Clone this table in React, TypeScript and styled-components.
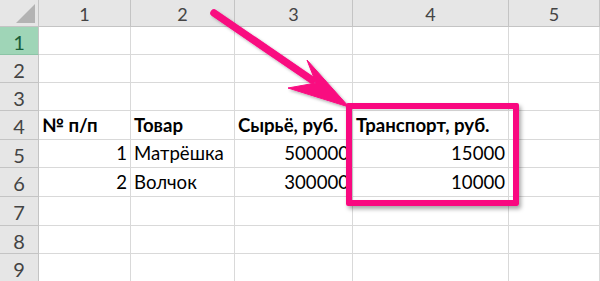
import React from "react";
import styled, { createGlobalStyle } from "styled-components";

const GlobalStyle = createGlobalStyle`
  html, body {
    margin: 0;
    padding: 0;
    background: #ffffff;
    overflow: hidden;
  }
  body {
    font-family: Lato, "Open Sans", "Liberation Sans", sans-serif;
  }
`;

const ACCENT = "#f90880";
const GRID_LINE = "#d9d9d9";
const HEAD_BG = "#e6e6e6";
const HEAD_LINE = "#c4c4c4";

const COLUMN_WIDTHS = [39, 92, 104, 118, 156, 91];
const ROW_HEIGHTS = [27, 28, 28, 28, 29, 28, 29, 29, 28, 28];

const Sheet = styled.div`
  position: relative;
  width: 600px;
  height: 281px;
  overflow: hidden;
  background: #ffffff;
`;

const Grid = styled.div<{ $cols: number[]; $rows: number[] }>`
  display: grid;
  grid-template-columns: ${(p) => p.$cols.map((c) => `${c}px`).join(" ")};
  grid-template-rows: ${(p) => p.$rows.map((r) => `${r}px`).join(" ")};
`;

const Corner = styled.div`
  position: relative;
  background: ${HEAD_BG};
  border-right: 1px solid ${HEAD_LINE};
  border-bottom: 1px solid ${HEAD_LINE};
  box-sizing: border-box;
  &::after {
    content: "";
    position: absolute;
    right: 3px;
    bottom: 3px;
    width: 0;
    height: 0;
    border-style: solid;
    border-width: 0 0 19px 19px;
    border-color: transparent transparent #b3b3b3 transparent;
  }
`;

const ColHead = styled.div`
  display: flex;
  align-items: center;
  justify-content: center;
  background: ${HEAD_BG};
  border-right: 1px solid ${HEAD_LINE};
  border-bottom: 1px solid ${HEAD_LINE};
  box-sizing: border-box;
  color: #444444;
  font-size: 18px;
  padding-top: 1px;
`;

const RowHead = styled.div<{ $selected?: boolean }>`
  display: flex;
  align-items: center;
  justify-content: center;
  background: ${(p) => (p.$selected ? "#9fd5b7" : HEAD_BG)};
  border-right: 1px solid ${HEAD_LINE};
  border-bottom: 1px solid ${(p) => (p.$selected ? "#8cc4a6" : HEAD_LINE)};
  box-sizing: border-box;
  color: ${(p) => (p.$selected ? "#185c37" : "#444444")};
  font-size: 20px;
  padding-top: 2px;
`;

const Cell = styled.div<{ $align?: "left" | "right"; $bold?: boolean }>`
  display: flex;
  align-items: flex-end;
  justify-content: ${(p) => (p.$align === "right" ? "flex-end" : "flex-start")};
  border-right: 1px solid ${GRID_LINE};
  border-bottom: 1px solid ${GRID_LINE};
  box-sizing: border-box;
  padding: 0 3px 3px 3px;
  color: #000000;
  font-size: 18.6px;
  line-height: 22px;
  font-weight: ${(p) => (p.$bold ? 700 : 400)};
  white-space: nowrap;
  overflow: visible;
`;

const Highlight = styled.div`
  position: absolute;
  left: 346px;
  top: 103px;
  width: 173px;
  height: 103px;
  box-sizing: border-box;
  border: 6px solid ${ACCENT};
  border-radius: 2px;
  box-shadow: 2px 3px 4px rgba(0, 0, 0, 0.35), inset 1px 1px 2px rgba(0, 0, 0, 0.15);
  pointer-events: none;
`;

const Pointer = styled.svg`
  position: absolute;
  left: 0;
  top: 0;
  width: 600px;
  height: 281px;
  pointer-events: none;
  overflow: visible;
`;

type CellData = { text: string; align?: "left" | "right"; bold?: boolean };

const rows: CellData[][] = [
  [],
  [],
  [],
  [
    { text: "№ п/п", bold: true },
    { text: "Товар", bold: true },
    { text: "Сырьё, руб.", bold: true },
    { text: "Транспорт, руб.", bold: true },
  ],
  [
    { text: "1", align: "right" },
    { text: "Матрёшка" },
    { text: "500000", align: "right" },
    { text: "15000", align: "right" },
  ],
  [
    { text: "2", align: "right" },
    { text: "Волчок" },
    { text: "300000", align: "right" },
    { text: "10000", align: "right" },
  ],
  [],
  [],
  [],
];

const columns = ["1", "2", "3", "4", "5"];

export default function App() {
  return (
    <>
      <GlobalStyle />
      <Sheet>
        <Grid $cols={COLUMN_WIDTHS} $rows={ROW_HEIGHTS}>
          <Corner />
          {columns.map((c) => (
            <ColHead key={c}>{c}</ColHead>
          ))}
          {rows.map((row, r) => (
            <React.Fragment key={r}>
              <RowHead $selected={r === 0}>{r + 1}</RowHead>
              {columns.map((_, c) => {
                const d = row[c];
                return (
                  <Cell key={c} $align={d?.align} $bold={d?.bold}>
                    {d?.text ?? ""}
                  </Cell>
                );
              })}
            </React.Fragment>
          ))}
        </Grid>

        <Pointer viewBox="0 0 600 281">
          <defs>
            <filter id="drop" x="-20%" y="-20%" width="140%" height="140%">
              <feDropShadow dx="2" dy="2" stdDeviation="1.5" floodColor="#000" floodOpacity="0.3" />
            </filter>
          </defs>
          <g filter="url(#drop)" fill={ACCENT} stroke={ACCENT}>
            <line x1="214" y1="13" x2="312" y2="80" strokeWidth="7.5" strokeLinecap="round" />
            <polygon points="349,107 307,60 316,83 288,88" strokeWidth="1" strokeLinejoin="round" />
          </g>
        </Pointer>

        <Highlight />
      </Sheet>
    </>
  );
}
